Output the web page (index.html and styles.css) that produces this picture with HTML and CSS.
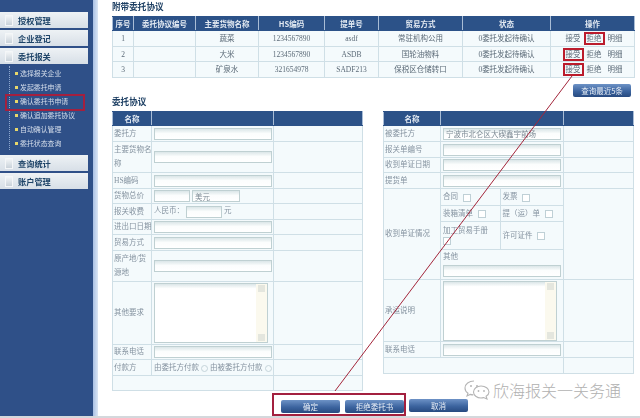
FILE: index.html
```html
<!DOCTYPE html>
<html lang="zh-CN">
<head>
<meta charset="utf-8">
<title>确认委托书申请</title>
<link rel="stylesheet" href="styles.css">
</head>
<body>
<div class="app">
  <nav class="sidebar">
    <a class="menu"><i class="page"></i>授权管理</a>
    <a class="menu"><i class="page"></i>企业登记</a>
    <a class="menu"><i class="page"></i>委托报关</a>
    <ul class="sub">
      <li>选择报关企业</li>
      <li>发起委托申请</li>
      <li class="current">确认委托书申请</li>
      <li>确认追加委托协议</li>
      <li>自动确认管理</li>
      <li>委托状态查询</li>
    </ul>
    <a class="menu"><i class="page"></i>查询统计</a>
    <a class="menu"><i class="page"></i>账户管理</a>
  </nav>
  <div class="strip"></div>
  <main class="main">
    <h2 class="title first">附带委托协议</h2>
    <table class="grid top">
      <colgroup><col class="t1"><col class="t2"><col class="t3"><col class="t4"><col class="t5"><col class="t6"><col class="t7"><col class="t8"></colgroup>
      <tr class="head"><th>序号</th><th>委托协议编号</th><th>主要货物名称</th><th>HS编码</th><th>提单号</th><th>贸易方式</th><th>状态</th><th>操作</th></tr>
      <tr><td>1</td><td></td><td>蔬菜</td><td>1234567890</td><td>asdf</td><td>常驻机构公用</td><td>0委托发起待确认</td><td class="ops"><span class="op">接受</span><span class="op mark">拒绝</span><span class="op">明细</span></td></tr>
      <tr><td>2</td><td></td><td>大米</td><td>1234567890</td><td>ASDB</td><td>国轮油物料</td><td>0委托发起待确认</td><td class="ops"><span class="op mark">接受</span><span class="op">拒绝</span><span class="op">明细</span></td></tr>
      <tr><td>3</td><td></td><td>矿泉水</td><td>321654978</td><td>SADF213</td><td>保税区仓储转口</td><td>0委托发起待确认</td><td class="ops"><span class="op mark">接受</span><span class="op">拒绝</span><span class="op">明细</span></td></tr>
    </table>
    <div class="query-row"><button class="btn query">查询最近5条</button></div>
    <h2 class="title second">委托协议</h2>
    <div class="forms">
      <table class="grid form left">
        <colgroup><col class="l1"><col class="l2"><col class="l3"></colgroup>
        <tr class="head"><th>名称</th><th></th><th></th></tr>
        <tr class="h16"><td class="lb">委托方</td><td><input class="field"></td><td></td></tr>
        <tr class="h31"><td class="lb">主要货物名<br>称</td><td><input class="field"></td><td></td></tr>
        <tr class="h16"><td class="lb">HS编码</td><td><input class="field"></td><td></td></tr>
        <tr class="h15"><td class="lb">货物总价</td><td class="pair"><input class="field small"><input class="field unit" value="美元"></td><td></td></tr>
        <tr class="h16"><td class="lb">报关收费</td><td class="plain">人民币：<input class="field small">元</td><td></td></tr>
        <tr class="h15"><td class="lb">进出口日期</td><td><input class="field"></td><td></td></tr>
        <tr class="h16"><td class="lb">贸易方式</td><td><input class="field"></td><td></td></tr>
        <tr class="h31"><td class="lb">原产地/货<br>源地</td><td><input class="field"></td><td></td></tr>
        <tr class="h63"><td class="lb">其他要求</td><td><div class="area"><div class="bar"><b class="up"></b><b class="down"></b></div></div></td><td></td></tr>
        <tr class="h15"><td class="lb">联系电话</td><td><input class="field"></td><td></td></tr>
        <tr class="h16"><td class="lb">付款方</td><td class="plain">由委托方付款<input class="radio" type="radio" name="p">由被委托方付款<input class="radio" type="radio" name="p"></td><td></td></tr>
        <tr class="h15"><td colspan="2"></td><td></td></tr>
      </table>
      <table class="grid form right">
        <colgroup><col class="r1"><col class="r2"><col class="r3"></colgroup>
        <tr class="head"><th>名称</th><th></th><th></th></tr>
        <tr class="h16"><td class="lb">被委托方</td><td><input class="field" value="宁波市北仑区大碶鑫宇前场"></td><td></td></tr>
        <tr class="h16"><td class="lb">报关单编号</td><td><input class="field"></td><td></td></tr>
        <tr class="h15"><td class="lb">收到单证日期</td><td><input class="field"></td><td></td></tr>
        <tr class="h16"><td class="lb">提货单</td><td><input class="field"></td><td></td></tr>
        <tr class="h90">
          <td class="lb">收到单证情况</td>
          <td class="nest">
            <table class="inner">
              <colgroup><col class="i1"><col class="i2"></colgroup>
              <tr class="h16"><td>合同 <input class="check" type="checkbox"></td><td>发票 <input class="check" type="checkbox"></td></tr>
              <tr class="h16"><td>装箱清单 <input class="check" type="checkbox"></td><td>提（运）单 <input class="check" type="checkbox"></td></tr>
              <tr class="h28"><td>加工贸易手册<br><input class="check flush" type="checkbox"></td><td>许可证件 <input class="check" type="checkbox"></td></tr>
              <tr class="h30"><td colspan="2">其他<input class="field other"></td></tr>
            </table>
          </td>
          <td></td>
        </tr>
        <tr class="h62"><td class="lb">承运说明</td><td><div class="area"><div class="bar"><b class="up"></b><b class="down"></b></div></div></td><td></td></tr>
        <tr class="h16"><td class="lb">联系电话</td><td><input class="field"></td><td></td></tr>
        <tr class="h16"><td colspan="2"></td><td></td></tr>
      </table>
    </div>
    <div class="actions">
      <div class="boxed">
        <button class="btn">确定</button>
        <button class="btn">拒绝委托书</button>
      </div>
      <button class="btn">取消</button>
    </div>
  </main>
</div>
<svg class="pointer" width="640" height="418" viewBox="0 0 640 418" aria-hidden="true"><path d="M572 76 335 391" fill="none" stroke="#a3253a" stroke-width="1"/></svg>
<div class="watermark">
  <svg width="26" height="20" viewBox="0 0 26 20" aria-hidden="true">
    <path d="M10 1C5 1 1 4 1 8c0 2.300 1.200 4 3 5.200L3 16l3.200-1.600c1 .3 2 .5 3 .5" fill="none" stroke="#b5b5b5" stroke-width="1.100"/>
    <path d="M17 6c-4 0-7.500 2.600-7.500 6s3.500 6 7.500 6c1 0 1.800-.2 2.600-.4L23 19l-.9-2.800c1.700-1 2.900-2.500 2.900-4.200 0-3.400-3.500-6-8-6Z" fill="none" stroke="#b5b5b5" stroke-width="1.100"/>
    <circle cx="7" cy="6" r="1" fill="#b5b5b5"/><circle cx="13" cy="6" r="1" fill="#b5b5b5"/>
    <circle cx="14.500" cy="11" r=".9" fill="#b5b5b5"/><circle cx="20" cy="11" r=".9" fill="#b5b5b5"/>
  </svg>
  <span>欣海报关一关务通</span>
</div>
</body>
</html>
```

FILE: styles.css
```css
* { box-sizing: border-box; }
html, body { margin: 0; padding: 0; }
body {
  width: 640px;
  height: 418px;
  overflow: hidden;
  position: relative;
  background: #fff;
  font-family: "Liberation Serif", "Noto Sans CJK SC", serif;
  font-size: 7.5px;
  color: #5c6b78;
}
.app {
  display: flex;
  height: 418px;
  filter: blur(0.45px);
  border-bottom: 2px solid #d4d8dc;
}

/* sidebar */
.sidebar {
  width: 93px;
  flex: none;
  padding: 12px 5px 0 0;
  background: #2f5088;
}
.strip {
  width: 5px;
  flex: none;
  background: linear-gradient(90deg, #a9c0e4, #dbe6f4);
}
.menu {
  display: flex;
  align-items: center;
  height: 16px;
  margin-bottom: 2px;
  padding-left: 5px;
  background: linear-gradient(180deg, #eef2f5, #d7dfe7);
  font-family: "Noto Sans CJK SC", sans-serif;
  font-size: 8.2px;
  font-weight: 700;
  color: #1e4468;
}
.page {
  width: 8px;
  height: 11px;
  margin-right: 5px;
  background: linear-gradient(180deg, #f7f9fa, #c9d2da);
  border: 1px solid #f4f6f8;
  border-top: 0;
}
.sub {
  list-style: none;
  margin: 2px 0 5px 9px;
  padding: 0 0 0 5px;
  height: 84px;
  border-left: 1px dotted #8fa8cf;
  font-family: "Noto Sans CJK SC", sans-serif;
  font-size: 6.9px;
  color: #d5deeb;
}
.sub li {
  position: relative;
  height: 14px;
  line-height: 14px;
  padding-left: 5px;
}
.sub li::before {
  content: "";
  position: absolute;
  left: 0;
  top: 6px;
  width: 3px;
  height: 3px;
  background: #e7d76a;
}
.sub .current::after {
  content: "";
  position: absolute;
  left: -10px;
  top: 0;
  width: 76px;
  height: 13px;
  border: 2px solid #a3203f;
}

/* main */
.main {
  flex: 1;
  min-width: 0;
  padding-left: 14px;
}
.title {
  margin: 0;
  height: 10px;
  line-height: 10px;
  font-family: "Noto Sans CJK SC", sans-serif;
  font-size: 8.6px;
  font-weight: 700;
  color: #1d3f63;
}
.first { margin-top: 1px; margin-bottom: 5px; }
.second { margin-bottom: 5px; }
.grid {
  border-collapse: collapse;
  table-layout: fixed;
  background: #f4fafc;
}
.grid th, .grid td {
  padding: 0;
  border: 1px solid #cfdfe6;
  text-align: center;
  vertical-align: middle;
  line-height: 11px;
  font-weight: 400;
}
.head th {
  height: 14px;
  background: #2c5288;
  border-color: #2c5288 #a9bdd6;
  color: #e4ebf3;
  font-family: "Noto Sans CJK SC", sans-serif;
  font-weight: 700;
}
.top { width: 522px; }
.top td { height: 15.700px; }
.t1 { width: 21px; } .t2 { width: 62px; } .t3 { width: 63px; } .t4 { width: 66px; }
.t5 { width: 54px; } .t6 { width: 84px; } .t7 { width: 88px; } .t8 { width: 84px; }
.grid td.ops { padding-left: 3px; }
.op { display: inline-block; padding: 0 2px; margin: 0 1px; line-height: 11px; }
.mark { outline: 2px solid #bb1c2c; outline-offset: -1px; }
.query-row {
  display: flex;
  justify-content: flex-end;
  height: 18px;
  padding: 6px 9px 0 0;
}
.btn {
  width: 59px;
  height: 13px;
  padding: 0;
  border: 0;
  border-radius: 2px;
  background: linear-gradient(180deg, #6d92c6, #3c649f 55%, #274a80);
  color: #e7edf5;
  font: 7.5px "Noto Sans CJK SC", sans-serif;
}
.query { width: 58px; }
.forms {
  display: flex;
  gap: 20px;
  align-items: flex-start;
}
.form { flex: none; color: #8593a0; }
.left { width: 250px; }
.right { width: 250px; }
.l1 { width: 39px; } .l2 { width: 122px; } .l3 { width: 89px; }
.r1 { width: 57px; } .r2 { width: 123px; } .r3 { width: 70px; }
.form td { text-align: left; padding-left: 2px; white-space: nowrap; overflow: hidden; }
.grid.form td.lb { line-height: 14px; padding-left: 1px; }
.h15 { height: 15px; } .h16 { height: 16px; } .h28 { height: 28px; } .h30 { height: 30px; }
.h31 { height: 31px; } .h62 { height: 62px; } .h63 { height: 63px; } .h90 { height: 90px; }
.field {
  display: block;
  width: 118px;
  height: 12px;
  padding: 0 2px;
  border: 1px solid #bfd0d2;
  outline: 0;
  background: linear-gradient(180deg, #dbe6e8, #fbfdfd 45%, #fff);
  color: #7d8a94;
  font: 7.5px "Noto Sans CJK SC", sans-serif;
}
.pair { font-size: 0; }
.small { display: inline-block; width: 36px; vertical-align: middle; }
.unit { display: inline-block; width: 48px; margin-left: 2px; vertical-align: middle; }
.plain .small { margin: 0 2px; }
.area {
  display: flex;
  justify-content: flex-end;
  width: 114px;
  height: 60px;
  background: linear-gradient(180deg, #dbe6e8, #fff 8%);
  border: 1px solid #bfd0d2;
}
.bar {
  position: relative;
  width: 11px;
  background: #fbf9ee;
}
.up, .down {
  position: absolute;
  left: 2px;
  width: 7px;
  height: 7px;
  background: #e4e6de;
}
.up { top: 1px; }
.down { bottom: 1px; }
.radio {
  appearance: none;
  width: 7px;
  height: 7px;
  margin: 0 2px 0 2px;
  border: 1px solid #c5d4da;
  border-radius: 50%;
  vertical-align: middle;
}
.check {
  appearance: none;
  width: 8px;
  height: 8px;
  margin: 0 0 0 3px;
  border: 1px solid #bfd0d6;
  background: #fff;
  vertical-align: middle;
}
.check.flush { margin-left: 0; display: block; margin-top: 1px; }
.nest.nest { padding: 0; }
.inner { width: 100%; height: 90px; border-collapse: collapse; table-layout: fixed; }
.i1 { width: 59px; }
.grid .inner td {
  border: 0;
  border-bottom: 1px solid #cfdfe6;
  border-left: 1px solid #cfdfe6;
  padding-left: 2px;
}
.grid .inner td:first-child { border-left: 0; }
.grid .inner tr:last-child td { border-bottom: 0; }
.other { width: 118px; margin-top: 3px; }
.actions {
  display: flex;
  align-items: flex-start;
  gap: 5px;
  margin-top: 2px;
  margin-left: 160px;
}
.boxed {
  display: flex;
  gap: 5px;
  width: 134px;
  height: 23px;
  padding: 5px 0 0 7px;
  border: 2px solid #a3203f;
}
.actions > .btn { margin-top: 6px; margin-left: -2px; }

/* overlays */
.pointer { position: absolute; left: 0; top: 0; filter: blur(0.3px); }
.watermark {
  position: absolute;
  left: 464px;
  top: 378px;
  display: flex;
  align-items: center;
  gap: 3px;
  font-family: "Noto Sans CJK SC", sans-serif;
  font-size: 16px;
  font-weight: 300;
  color: #b0b0b0;
}
```
